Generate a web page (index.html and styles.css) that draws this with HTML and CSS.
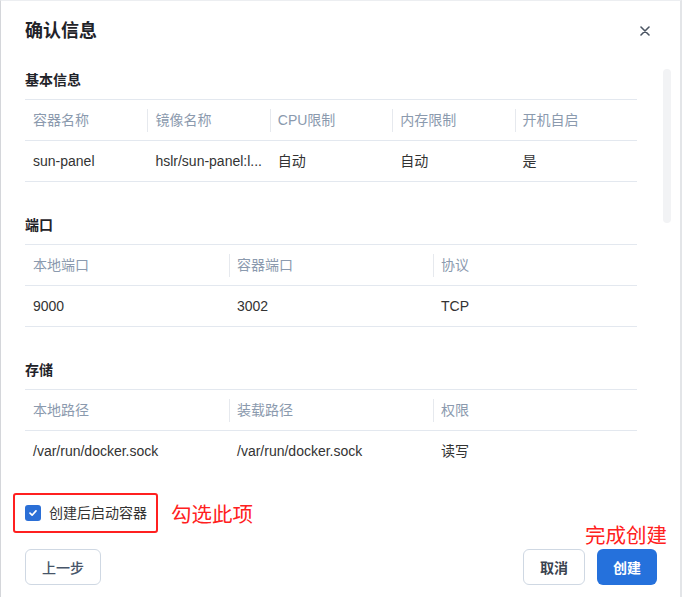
FILE: index.html
```html
<!DOCTYPE html>
<html lang="zh-CN">
<head>
<meta charset="utf-8">
<title>确认信息</title>
<link rel="stylesheet" href="styles.css">
</head>
<body>
<div class="dialog">
  <header class="dlg-head">
    <h2 class="dlg-title">确认信息</h2>
    <button class="close" aria-label="关闭">
      <svg width="10" height="10" viewBox="0 0 10 10"><path d="M1 1L9 9M9 1L1 9" stroke="#4b5563" stroke-width="1.6" stroke-linecap="round" fill="none"/></svg>
    </button>
  </header>

  <div class="dlg-body">
    <div class="scroll">
      <section class="sec">
        <h3 class="sec-title">基本信息</h3>
        <div class="tbl cols5">
          <div class="tr th">
            <div class="td"><span class="lbl">容器名称</span></div>
            <div class="td"><span class="lbl">镜像名称</span></div>
            <div class="td"><span class="lbl">CPU限制</span></div>
            <div class="td"><span class="lbl">内存限制</span></div>
            <div class="td"><span class="lbl">开机自启</span></div>
          </div>
          <div class="tr">
            <div class="td">sun-panel</div>
            <div class="td" title="hslr/sun-panel:latest">hslr/sun-panel:l...</div>
            <div class="td">自动</div>
            <div class="td">自动</div>
            <div class="td">是</div>
          </div>
        </div>
      </section>

      <section class="sec">
        <h3 class="sec-title">端口</h3>
        <div class="tbl cols3">
          <div class="tr th">
            <div class="td"><span class="lbl">本地端口</span></div>
            <div class="td"><span class="lbl">容器端口</span></div>
            <div class="td"><span class="lbl">协议</span></div>
          </div>
          <div class="tr">
            <div class="td">9000</div>
            <div class="td">3002</div>
            <div class="td">TCP</div>
          </div>
        </div>
      </section>

      <section class="sec">
        <h3 class="sec-title">存储</h3>
        <div class="tbl cols3 open-end">
          <div class="tr th">
            <div class="td"><span class="lbl">本地路径</span></div>
            <div class="td"><span class="lbl">装载路径</span></div>
            <div class="td"><span class="lbl">权限</span></div>
          </div>
          <div class="tr">
            <div class="td">/var/run/docker.sock</div>
            <div class="td">/var/run/docker.sock</div>
            <div class="td">读写</div>
          </div>
        </div>
      </section>
    </div>
    <div class="scrollbar"></div>
  </div>

  <div class="opts">
    <label class="chk-wrap">
      <span class="chk">
        <svg width="10" height="10" viewBox="0 0 10 10"><path d="M2 5.2L4.1 7.2L8 2.9" stroke="#fff" stroke-width="1.7" fill="none" stroke-linecap="round" stroke-linejoin="round"/></svg>
      </span>
      <span class="chk-label">创建后启动容器</span>
    </label>
    <span class="note">勾选此项</span>
  </div>

  <div class="actions">
    <button class="btn">上一步</button>
    <div class="right">
      <button class="btn strong">取消</button>
      <button class="btn primary">创建</button>
    </div>
  </div>

  <span class="note note-create">完成创建</span>
</div>
</body>
</html>
```

FILE: styles.css
```css
* { box-sizing: border-box; }

html, body {
  margin: 0;
  padding: 0;
  background: #eef0f3;
}

body {
  font-family: "Liberation Sans", "Noto Sans CJK SC", sans-serif;
  color: #333;
}

.dialog {
  position: relative;
  width: 682px;
  height: 597px;
  background: #fff;
  border-left: 1px solid #d4d6da;
  border-right: 2px solid #e3e5e8;
  border-top: 1px solid #eceef1;
}

.dlg-head {
  height: 59px;
  display: flex;
  align-items: center;
  padding: 0 28px 0 24px;
}

.dlg-title {
  margin: 0;
  font-size: 18px;
  line-height: 24px;
  font-weight: 700;
  color: #1f2329;
}

.close {
  margin-left: auto;
  width: 14px;
  height: 14px;
  padding: 0;
  border: 0;
  background: none;
  display: flex;
  align-items: center;
  justify-content: center;
}

.dlg-body {
  display: flex;
  height: 411px;
  padding-left: 24px;
  overflow: hidden;
}

.scroll {
  width: 612px;
  flex: none;
}

.scrollbar {
  width: 8px;
  height: 154px;
  margin-top: 9px;
  margin-left: 26px;
  border-radius: 4px;
  background: #f2f3f5;
}

.sec { padding-top: 33px; }
.sec:first-child { padding-top: 10px; }

.sec-title {
  margin: 0 0 9px;
  font-size: 14px;
  line-height: 20px;
  font-weight: 700;
  color: #1f2329;
}

.tbl { border-bottom: 1px solid #e3e8ef; }
.tbl.open-end { border-bottom: 0; }

.tr {
  display: grid;
  height: 41px;
  border-top: 1px solid #e3e8ef;
  align-items: center;
  font-size: 14px;
}

.cols5 .tr { grid-template-columns: repeat(5, 1fr); }
.cols3 .tr { grid-template-columns: repeat(3, 1fr); }

.td {
  padding: 0 8px;
  white-space: nowrap;
  overflow: hidden;
  color: #333;
  line-height: 20px;
}

.th .td {
  padding: 0;
  display: flex;
  align-items: center;
}

.th .lbl {
  display: block;
  line-height: 23px;
  padding-left: 7px;
  border-left: 1px solid #e6e9ee;
  color: #8b9aae;
}

.th .td:first-child .lbl {
  border-left: 0;
  padding-left: 8px;
}

.opts {
  display: flex;
  align-items: center;
  margin-top: 22px;
  padding-left: 12px;
}

.chk-wrap {
  display: flex;
  align-items: center;
  gap: 8px;
  height: 40px;
  padding: 0 9px 0 10px;
  border: 2px solid #ff2020;
  border-radius: 3px;
}

.chk {
  width: 16px;
  height: 16px;
  border-radius: 3px;
  background: #2b6fd6;
  display: flex;
  align-items: center;
  justify-content: center;
}

.chk-label {
  font-size: 14px;
  color: #333;
  line-height: 20px;
}

.note {
  color: #ff2020;
  font-size: 20.5px;
  line-height: 24px;
  font-family: "Noto Sans CJK SC", sans-serif;
}

.opts .note { margin-left: 13px; }

.note-create {
  position: absolute;
  left: 584px;
  top: 521px;
}

.actions {
  display: flex;
  align-items: center;
  justify-content: space-between;
  margin-top: 16px;
  padding: 0 23px 0 24px;
}

.right {
  display: flex;
  gap: 12px;
}

.btn {
  height: 36px;
  padding: 0 16px;
  border: 1px solid #cfd8e3;
  border-radius: 6px;
  background: #fff;
  font-family: "Liberation Sans", "Noto Sans CJK SC", sans-serif;
  font-size: 14px;
  color: #475569;
  font-weight: 500;
}

.btn.strong {
  font-weight: 700;
  color: #3b4350;
}

.btn.primary {
  border: 0;
  width: 60px;
  background: #2571dc;
  color: #fff;
  font-weight: 700;
}
```
